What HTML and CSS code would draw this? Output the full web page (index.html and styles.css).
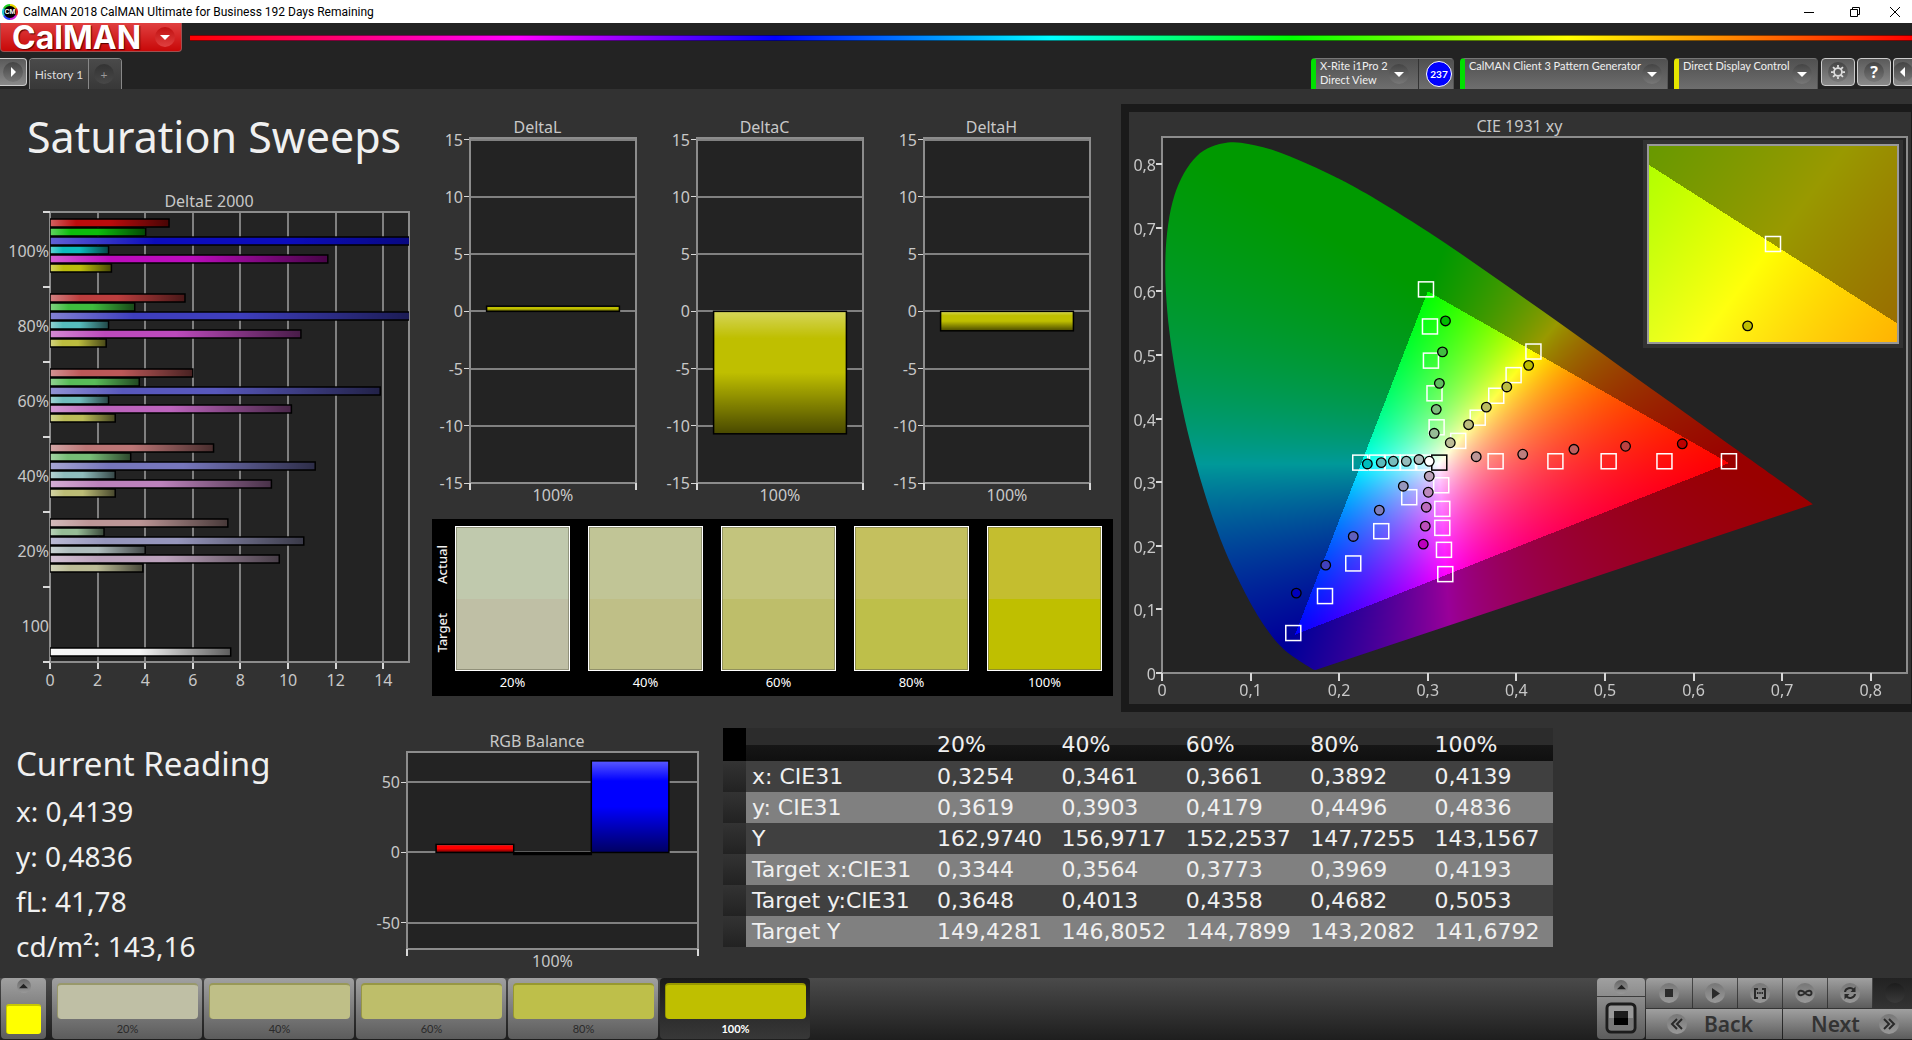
FILE: index.html
```html
<!DOCTYPE html>
<html lang="en">
<head>
	<meta charset="UTF-8">
	<title>CalMAN 2018</title>
	<link rel="stylesheet" href="styles.css">
</head>
<body>
	<div class="titlebar">
		<svg class="appicon" viewBox="0 0 16 16">
			<circle cx="8" cy="8" r="7" fill="#000"/>
			<path d="M8 1a7 7 0 0 1 6 3.500" fill="none" stroke="#e6d800" stroke-width="2"/>
			<path d="M14 4.500a7 7 0 0 1 0 7" fill="none" stroke="#e02020" stroke-width="2"/>
			<path d="M14 11.500a7 7 0 0 1-6 3.500" fill="none" stroke="#d020d0" stroke-width="2"/>
			<path d="M8 15a7 7 0 0 1-6-3.500" fill="none" stroke="#3040ff" stroke-width="2"/>
			<path d="M2 11.500a7 7 0 0 1 0-7" fill="none" stroke="#20c8d0" stroke-width="2"/>
			<path d="M2 4.500a7 7 0 0 1 6-3.500" fill="none" stroke="#20d020" stroke-width="2"/>
			<text x="8" y="10" text-anchor="middle" class="apptext">CM</text>
		</svg>
		<span class="wintitle">CalMAN 2018 CalMAN Ultimate for Business 192 Days Remaining</span>
		<button class="winbtn" aria-label="Minimize"><svg viewBox="0 0 12 12"><path d="M1 6.500h10"/></svg></button>
		<button class="winbtn" aria-label="Restore"><svg viewBox="0 0 12 12"><path d="M1.500 3.500h7v7h-7zM3.500 3.500v-2h7v7h-2"/></svg></button>
		<button class="winbtn closebtn" aria-label="Close"><svg viewBox="0 0 12 12"><path d="M1 1l10 10M11 1L1 11"/></svg></button>
	</div>

	<div class="header">
		<div class="brandrow">
			<button class="brand">CalMAN<span class="round redround"><svg viewBox="0 0 10 10"><path d="M0 3h10L5 8z"/></svg></span></button>
			<div class="rainbow"></div>
		</div>
		<div class="tabrow">
			<button class="sq first" aria-label="Expand"><span class="round"><svg viewBox="0 0 10 10"><path d="M3 0v10l5-5z"/></svg></span></button>
			<div class="tabs">
				<button class="tab">History 1</button>
				<button class="tab plus"><span class="round dim">+</span></button>
			</div>
			<div class="devices">
				<div class="device meter">
					<button class="devbtn"><span class="devname">X-Rite i1Pro 2<br>Direct View</span><span class="round"><svg viewBox="0 0 10 10"><path d="M0 3h10L5 8z"/></svg></span></button>
					<span class="badge">237</span>
				</div>
				<div class="device source">
					<button class="devbtn"><span class="devname">CalMAN Client 3 Pattern Generator</span><span class="round"><svg viewBox="0 0 10 10"><path d="M0 3h10L5 8z"/></svg></span></button>
				</div>
				<div class="device display">
					<button class="devbtn"><span class="devname">Direct Display Control</span><span class="round"><svg viewBox="0 0 10 10"><path d="M0 3h10L5 8z"/></svg></span></button>
				</div>
				<button class="sq" aria-label="Settings"><span class="round"><svg class="gear" viewBox="0 0 16 16"><circle cx="8" cy="8" r="4.500" fill="none" stroke="#ddd" stroke-width="2"/><path d="M8 0v3M8 13v3M0 8h3M13 8h3M2.300 2.300l2.200 2.200M11.500 11.500l2.200 2.200M2.300 13.700l2.200-2.200M11.500 4.500l2.200-2.200" stroke="#ddd" stroke-width="2"/></svg></span></button>
				<button class="sq" aria-label="Help"><span class="round help">?</span></button>
				<button class="sq last" aria-label="Collapse"><span class="round"><svg viewBox="0 0 10 10"><path d="M7 0v10L2 5z"/></svg></span></button>
			</div>
		</div>
	</div>

	<div class="workspace">
		<div class="top">
			<div class="col1">
				<h1>Saturation Sweeps</h1>
				<div class="chart" id="deltaE"></div>
			</div>
			<div class="col2">
				<div class="deltas">
					<div class="chart" id="deltaL"></div>
					<div class="chart" id="deltaC"></div>
					<div class="chart" id="deltaH"></div>
				</div>
				<div class="compare">
					<div class="sides"><span>Actual</span><span>Target</span></div>
					<div class="patch"><div class="pair"><i class="a20"></i><i class="t20"></i></div>20%</div>
					<div class="patch"><div class="pair"><i class="a40"></i><i class="t40"></i></div>40%</div>
					<div class="patch"><div class="pair"><i class="a60"></i><i class="t60"></i></div>60%</div>
					<div class="patch"><div class="pair"><i class="a80"></i><i class="t80"></i></div>80%</div>
					<div class="patch"><div class="pair"><i class="a100"></i><i class="t100"></i></div>100%</div>
				</div>
			</div>
			<div class="ciepanel">
				<div class="chart" id="cie"></div>
			</div>
		</div>
		<div class="bottom">
			<div class="reading">
				<h2>Current Reading</h2>
				<p>x: 0,4139</p>
				<p>y: 0,4836</p>
				<p>fL: 41,78</p>
				<p>cd/m²: 143,16</p>
			</div>
			<div class="chart rgb" id="rgb"></div>
			<table class="data">
				<thead>
					<tr><th class="stub"></th><th class="name"></th><th>20%</th><th>40%</th><th>60%</th><th>80%</th><th>100%</th></tr>
				</thead>
				<tbody>
					<tr><td class="stub"></td><td>x: CIE31</td><td>0,3254</td><td>0,3461</td><td>0,3661</td><td>0,3892</td><td>0,4139</td></tr>
					<tr><td class="stub"></td><td>y: CIE31</td><td>0,3619</td><td>0,3903</td><td>0,4179</td><td>0,4496</td><td>0,4836</td></tr>
					<tr><td class="stub"></td><td>Y</td><td>162,9740</td><td>156,9717</td><td>152,2537</td><td>147,7255</td><td>143,1567</td></tr>
					<tr><td class="stub"></td><td>Target x:CIE31</td><td>0,3344</td><td>0,3564</td><td>0,3773</td><td>0,3969</td><td>0,4193</td></tr>
					<tr><td class="stub"></td><td>Target y:CIE31</td><td>0,3648</td><td>0,4013</td><td>0,4358</td><td>0,4682</td><td>0,5053</td></tr>
					<tr><td class="stub"></td><td>Target Y</td><td>149,4281</td><td>146,8052</td><td>144,7899</td><td>143,2082</td><td>141,6792</td></tr>
				</tbody>
			</table>
		</div>
	</div>

	<div class="footer">
		<button class="current" aria-label="Pattern colour"><span class="mini"><svg viewBox="0 0 10 10"><path d="M0 7h10L5 2z"/></svg></span><i class="yellow"></i></button>
		<div class="levels">
			<button class="level"><i class="t20"></i>20%</button>
			<button class="level"><i class="t40"></i>40%</button>
			<button class="level"><i class="t60"></i>60%</button>
			<button class="level"><i class="t80"></i>80%</button>
			<button class="level active"><i class="t100"></i>100%</button>
		</div>
		<div class="stopbox">
			<button class="up" aria-label="More"><span class="mini"><svg viewBox="0 0 10 10"><path d="M0 7h10L5 2z"/></svg></span></button>
			<button class="bigstop" aria-label="Pattern window"><svg viewBox="0 0 32 32"><rect x="2" y="2" width="28" height="28" rx="4" fill="#999" stroke="#1c1c1c" stroke-width="3"/><rect x="4" y="16" width="24" height="12" fill="#777"/><rect x="9" y="9" width="14" height="14" fill="#000"/><rect x="9" y="9" width="14" height="7" fill="#1c1c1c"/></svg></button>
		</div>
		<div class="controls">
			<div class="crow">
				<button class="ctl" aria-label="Stop"><span class="knob"><svg viewBox="0 0 20 20"><path d="M6 6h8v8H6z"/></svg></span></button>
				<button class="ctl" aria-label="Play"><span class="knob"><svg viewBox="0 0 20 20"><path d="M7 5v11l8-5.500z"/></svg></span></button>
				<button class="ctl" aria-label="Read series"><span class="knob"><svg viewBox="0 0 20 20"><path d="M4 5h4v2H6v7h2v2H4zM16 5h-4v2h2v7h-2v2h4zM7 9h1.500v2H7zM9.250 9h1.500v2h-1.500zM11.500 9H13v2h-1.500z"/></svg></span></button>
				<button class="ctl" aria-label="Continuous"><span class="knob"><svg viewBox="0 0 20 20"><path class="line" d="M10 10C8 7.500 3.500 6.500 3.500 10S8 12.500 10 10s6.500-3.500 6.500 0S12 12.500 10 10z"/></svg></span></button>
				<button class="ctl" aria-label="Refresh"><span class="knob"><svg viewBox="0 0 20 20"><path class="line" d="M5 9c.5-4 6-5 8.500-2.500M15 11c-.5 4-6 5-8.500 2.500"/><path d="M15.500 3.500v5.500h-5zM4.500 16.500V11h5z"/></svg></span></button>
				<button class="ctl off" aria-label="Idle"><span class="knob"></span></button>
			</div>
			<div class="crow">
				<button class="nav back"><span class="knob"><svg viewBox="0 0 20 20"><path class="line" d="M10 5l-5 5 5 5M15 5l-5 5 5 5"/></svg></span>Back</button>
				<button class="nav next">Next<span class="knob"><svg viewBox="0 0 20 20"><path class="line" d="M5 5l5 5-5 5M10 5l5 5-5 5"/></svg></span></button>
			</div>
		</div>
	</div>
	<script src="charts.js"></script>
</body>
</html>
```
FILE: styles.css
```css
*{
	box-sizing: border-box;
}
body{
	margin: 0;
	height: 100vh;
	display: flex;
	flex-direction: column;
	overflow: hidden;
	background-color: #323232;
	color: #f0f0f0;
	font-family: "Noto Sans", "Open Sans", sans-serif;
}
button{
	border: 0;
	padding: 0;
	margin: 0;
	font-family: inherit;
	color: inherit;
}
svg{
	display: block;
}

/* title bar */
.titlebar{
	height: 23px;
	flex: none;
	display: flex;
	align-items: center;
	background-color: #fff;
	color: #000;
}
.appicon{
	width: 16px;
	height: 16px;
	margin: 0 5px 0 2px;
}
.apptext{
	font: bold 7px "Liberation Sans", sans-serif;
	fill: #fff;
}
.wintitle{
	flex: 1;
	font: 12px Roboto, sans-serif;
}
.winbtn{
	width: 46px;
	height: 23px;
	display: flex;
	align-items: center;
	justify-content: center;
	background: none;
}
.closebtn{
	width: 34px;
}
.winbtn svg{
	width: 12px;
	height: 12px;
	fill: none;
	stroke: #000;
}

/* header */
.header{
	height: 66px;
	flex: none;
	display: flex;
	flex-direction: column;
	justify-content: space-between;
	background-color: #232323;
}
.brandrow{
	display: flex;
	align-items: center;
	gap: 8px;
}
.brand{
	width: 182px;
	height: 29px;
	display: flex;
	align-items: center;
	justify-content: space-between;
	padding: 0 6px 0 11px;
	border: 1px solid #a05050;
	border-top: 0;
	border-radius: 0 0 4px 4px;
	background: linear-gradient(#e04040, #c80808);
	color: #fff;
	font: 700 32px/29px Inter, sans-serif;
	text-shadow: 1px 1px 1px #500;
}
.rainbow{
	flex: 1;
	height: 6px;
	border-top: 1px solid rgba(0,0,0,.5);
	border-bottom: 1px solid rgba(0,0,0,.5);
	background: linear-gradient(90deg, #f00, #f0f 19%, #00f 34%, #0ff 50%, #0f0 64%, #ff0 80%, #f00) border-box;
}
.round{
	width: 20px;
	height: 20px;
	flex: none;
	display: flex;
	align-items: center;
	justify-content: center;
	border-radius: 50%;
	background: linear-gradient(#444, #777);
}
.round svg{
	width: 10px;
	height: 10px;
	fill: #fff;
}
.redround{
	background: linear-gradient(#c01010, #e04040);
}
.tabrow{
	height: 31px;
	display: flex;
	align-items: flex-start;
}
.sq{
	width: 34px;
	height: 28px;
	flex: none;
	display: flex;
	align-items: center;
	justify-content: center;
	border: 1px solid #ccc;
	border-radius: 4px;
	background: linear-gradient(#5a5a5a, #8a8a8a);
}
.first{
	width: 27px;
	border-left: 0;
	border-radius: 0 4px 4px 0;
}
.last{
	width: 19px;
	border-right: 0;
	border-radius: 4px 0 0 4px;
	overflow: hidden;
}
.sq .gear{
	width: 14px;
	height: 14px;
}
.help{
	font-size: 16px;
	font-weight: bold;
	color: #fff;
}
.tabs{
	display: flex;
	height: 31px;
	margin-left: 2px;
	border: 1px solid #888;
	border-bottom: 0;
	border-radius: 4px 4px 0 0;
	overflow: hidden;
}
.tab{
	width: 58px;
	background: linear-gradient(#4a4a4a, #383838);
	color: #ddd;
	font: 12px Lato, sans-serif;
}
.plus{
	width: 33px;
	padding-left: 5px;
	border-left: 1px solid #888;
}
.dim{
	background: linear-gradient(#333, #484848);
	color: #999;
}
.devices{
	flex: 1;
	height: 31px;
	display: flex;
	justify-content: flex-end;
	gap: 2px;
}
.device{
	height: 31px;
	display: flex;
	align-items: center;
	margin-right: 4px;
	border-top: 1px solid #777;
	border-right: 1px solid #555;
	border-left: 5px solid #00e000;
	border-radius: 4px 4px 0 0;
	background: linear-gradient(#505050, #6e6e6e);
}
.devbtn{
	height: 30px;
	flex: 1;
	display: flex;
	align-items: center;
	justify-content: space-between;
	padding: 0 5px 0 4px;
	background: none;
	color: #f0f0f0;
	text-align: left;
	font: 11px/14px Lato, sans-serif;
}
.devname{
	align-self: flex-start;
}
.meter{
	width: 143px;
}
.meter .devbtn{
	padding-right: 9px;
	border-right: 1px solid #333;
}
.source{
	width: 208px;
}
.display{
	width: 144px;
	margin-right: 1px;
	border-left-color: #e6e600;
}
.badge{
	width: 26px;
	height: 26px;
	margin: 0 1px 0 7px;
	border: 1px solid #fff;
	border-radius: 50%;
	background-color: #00f;
	color: #fff;
	font: bold 10px/24px Lato, sans-serif;
	text-align: center;
}

/* workspace */
.workspace{
	flex: 1;
	min-height: 0;
	display: grid;
	grid-template-rows: minmax(0, 608fr) minmax(0, 250fr);
	gap: 16px;
	padding: 15px 0 0 8px;
}
.top{
	display: grid;
	grid-template-columns: minmax(0, 416fr) minmax(0, 681fr) minmax(0, 791fr);
	gap: 8px;
}
.chart{
	min-width: 0;
	min-height: 0;
	overflow: hidden;
}
.chart text{
	font-size: 16px;
	fill: #c8c8c8;
}
.col1{
	display: flex;
	flex-direction: column;
	padding: 0 14px 20px 0;
	min-height: 0;
}
h1{
	margin: 0 0 21px 19px;
	font-size: 43px;
	line-height: 66px;
	font-weight: 400;
	white-space: nowrap;
}
.col1 .chart{
	flex: 1;
}
.col2{
	display: flex;
	flex-direction: column;
	gap: 10px;
	padding: 13px 0 16px;
	min-height: 0;
}
.deltas{
	flex: 1;
	min-height: 0;
	display: grid;
	grid-template-columns: repeat(3, minmax(0, 1fr));
	gap: 28px;
	padding: 0 22px 0 6px;
}
.compare{
	height: 177px;
	display: flex;
	gap: 18px;
	padding: 7px 11px 0 0;
	background-color: #000;
	font-size: 13px;
}
.sides{
	width: 23px;
	height: 145px;
	margin-right: -18px;
	padding: 4px 4px 4px 0;
	display: flex;
	flex-direction: column;
	justify-content: space-around;
	align-items: center;
	font-weight: 500;
}
.sides span{
	writing-mode: vertical-rl;
	transform: rotate(180deg);
}
.patch{
	flex: 1;
	text-align: center;
	line-height: 22px;
	color: #fff;
}
.pair{
	height: 145px;
	display: flex;
	flex-direction: column;
	border: 1px solid #fff;
}
.pair i{
	flex: 1;
	border: 1px solid rgba(100,100,80,.5);
	border-bottom: 0;
}
.pair i + i{
	border-top: 0;
	border-bottom: 1px solid rgba(100,100,80,.5);
}
.a20{ background-color: #c0c9ad; }
.a40{ background-color: #c1c596; }
.a60{ background-color: #c3c47d; }
.a80{ background-color: #c4c05e; }
.a100{ background-color: #c4be2f; }
.t20{ background-color: #bfbfa5; }
.t40{ background-color: #bfbf87; }
.t60{ background-color: #bebe6a; }
.t80{ background-color: #bebf4a; }
.t100{ background-color: #bfbf00; }
.ciepanel{
	display: flex;
	min-height: 0;
	padding: 4px 3px 0 2px;
	border: 8px solid #1a1a1a;
	border-right-width: 1px;
}
.ciepanel .chart{
	flex: 1;
	position: relative;
}
/* the colour fill lies under the axes */
.ciepanel canvas, .ciepanel svg{
	position: absolute;
	left: 0;
	top: 0;
}
.bottom{
	display: grid;
	grid-template-columns: minmax(0, 367fr) minmax(0, 324fr) 24px minmax(0, 830fr) minmax(0, 359fr);
	align-items: start;
}
.reading{
	padding: 11px 0 0 8px;
}
h2{
	margin: 0;
	font-size: 33px;
	line-height: 50px;
	font-weight: 400;
}
.reading p{
	margin: 0;
	font-size: 28px;
	line-height: 45px;
}
.rgb{
	align-self: stretch;
	margin: 3px 0;
}
.data{
	grid-column: 4;
	width: 100%;
	table-layout: fixed;
	border-collapse: collapse;
	font: 22px/31px "DejaVu Sans", sans-serif;
}
.data th, .data td{
	height: 31px;
	padding: 0 0 0 6px;
	text-align: left;
	font-weight: 400;
	white-space: nowrap;
}
.data th{
	height: 33px;
	background: linear-gradient(#2c2c2c 50%, #161616 51%, #101010);
}
.data .name{
	width: 185px;
}
.data .stub{
	width: 23px;
	background: linear-gradient(#333, #222);
}
.data th.stub{
	background: #000;
}
.data tbody tr{
	background-color: #404040;
}
.data tbody tr:nth-child(even){
	background-color: #808080;
}

/* footer */
.footer{
	height: 62px;
	flex: none;
	display: flex;
	padding-left: 1px;
	background: linear-gradient(#4a4a4a, #1e1e1e);
}
.footer button{
	background: linear-gradient(#a0a0a0, #5c5c5c);
}
.current{
	width: 45px;
	height: 61px;
	display: flex;
	flex-direction: column;
	align-items: center;
	justify-content: space-between;
	border-radius: 4px;
}
.footer .current{
	padding: 1px 0 5px;
}
.mini{
	width: 14px;
	height: 14px;
	display: flex;
	align-items: center;
	justify-content: center;
	border-radius: 50%;
	background: linear-gradient(#666, #999);
}
.mini svg{
	width: 9px;
	height: 9px;
	fill: #222;
}
.yellow{
	width: 35px;
	height: 30px;
	border-top: 2px solid #c8c800;
	border-left: 1px solid #c8c800;
	border-radius: 3px;
	background-color: #ff0;
}
.levels{
	display: flex;
	gap: 2px;
	margin-left: 6px;
}
.level{
	width: 150px;
	height: 61px;
	border-radius: 4px;
	color: #2a2a2a;
	font: 11px/20px Lato, sans-serif;
}
.footer .level{
	padding: 5px 4px 0 5px;
}
.level i{
	display: block;
	height: 36px;
	border-top: 2px solid rgba(80,80,0,.35);
	border-left: 1px solid rgba(80,80,0,.35);
	border-radius: 4px;
}
.footer .active{
	background: linear-gradient(#1a1a1a, #383838);
	color: #fff;
	font-weight: bold;
}
.stopbox{
	width: 48px;
	margin-left: auto;
	display: flex;
	flex-direction: column;
	gap: 1px;
}
.stopbox button{
	display: flex;
	align-items: center;
	justify-content: center;
}
.stopbox .up{
	height: 18px;
	border-radius: 4px 4px 0 0;
	background: linear-gradient(#a0a0a0, #8c8c8c);
}
.stopbox .bigstop{
	height: 42px;
	border-radius: 0 0 4px 4px;
	background: linear-gradient(#8c8c8c, #5c5c5c);
}
.bigstop svg{
	width: 32px;
	height: 32px;
}
.controls{
	width: 266px;
	margin-left: 1px;
	display: flex;
	flex-direction: column;
	gap: 1px;
}
.crow{
	display: flex;
	gap: 1px;
	overflow: hidden;
}
.ctl{
	width: 44px;
	height: 30px;
	flex: none;
	display: flex;
	align-items: center;
	justify-content: center;
}
.ctl:first-child{
	width: 46px;
	border-radius: 4px 0 0 0;
}
.footer .off{
	background: linear-gradient(#222, #333);
}
.knob{
	width: 20px;
	height: 20px;
	border-radius: 50%;
	background: linear-gradient(#777, #999);
}
.off .knob{
	background: linear-gradient(#1c1c1c, #3a3a3a);
}
.knob svg{
	width: 20px;
	height: 20px;
	fill: #2a2a2a;
}
.knob .line{
	fill: none;
	stroke: #2a2a2a;
	stroke-width: 2;
}
.nav{
	height: 30px;
	flex: none;
	display: flex;
	align-items: center;
	color: #333;
	font-size: 21px;
	font-weight: 600;
}
.back{
	width: 136px;
	gap: 17px;
}
.footer .back{
	padding-left: 21px;
}
.next{
	width: 134px;
	gap: 19px;
}
.footer .next{
	padding-left: 28px;
}
```
FILE: charts.js
```js
var NS = "http://www.w3.org/2000/svg";

function add(parent, name, attrs, text){
	var e = document.createElementNS(NS, name);
	for(var k in attrs){
		e.setAttribute(k, attrs[k]);
	}
	if(text !== undefined){
		e.textContent = text;
	}
	parent.appendChild(e);
	return e;
}

function label(svg, x, y, text, anchor){
	add(svg, "text", {x: x, y: y + 6, "text-anchor": anchor || "middle"}, text);
}

function line(svg, x1, y1, x2, y2, color, width){
	add(svg, "path", {d: "M" + x1 + " " + y1 + "L" + x2 + " " + y2, stroke: color, "stroke-width": width, "shape-rendering": "crispEdges"});
}

// plot frame inside the box, title centred over the whole box
function frame(id, title, left, bottom){
	var box = document.getElementById(id);
	box.innerHTML = "";
	var w = box.clientWidth, h = box.clientHeight;
	var svg = add(box, "svg", {width: w, height: h});
	var p = {box: box, svg: svg, x: left, y: 21, w: w - left - 1, h: h - bottom - 21};
	p.r = p.x + p.w;
	p.b = p.y + p.h;
	label(svg, w / 2, 10, title);
	add(svg, "rect", {x: p.x, y: p.y, width: p.w, height: p.h, fill: "#232323"});
	return p;
}

function border(p){
	add(p.svg, "rect", {x: p.x, y: p.y, width: p.w, height: p.h, fill: "none", stroke: "#8c8c8c", "stroke-width": 2, "shape-rendering": "crispEdges"});
}

var gradId = 0;
function bar(svg, x, y, w, h, color, horizontal){
	var id = "g" + (gradId++);
	var g = add(svg, "linearGradient", {id: id, x1: 0, y1: 0, x2: horizontal ? 1 : 0, y2: horizontal ? 0 : 1});
	add(g, "stop", {offset: 0, "stop-color": "#fff", "stop-opacity": 0.35});
	add(g, "stop", {offset: 0.22, "stop-color": "#fff", "stop-opacity": 0});
	add(g, "stop", {offset: 0.5, "stop-color": "#000", "stop-opacity": 0});
	add(g, "stop", {offset: 1, "stop-color": "#000", "stop-opacity": 0.62});
	add(svg, "rect", {x: x, y: y, width: w, height: h, fill: color});
	add(svg, "rect", {x: x, y: y, width: w, height: h, fill: "url(#" + id + ")", stroke: "#000", "stroke-width": 1.5});
}

var sweeps = [
	["100%", 12, [5.0, 4.02, 20, 2.46, 11.67, 2.58]],
	["80%", 62, [5.67, 3.56, 16, 2.46, 10.54, 2.36]],
	["60%", 88, [6.0, 3.75, 13.87, 2.46, 10.14, 2.74]],
	["40%", 118, [6.87, 3.39, 11.14, 2.74, 9.3, 2.74]],
	["20%", 150, [7.47, 2.27, 10.66, 4.0, 9.63, 3.9]],
	["100", 255, []]
];
// which of R, G, B is high for each series
var hues = ["100", "010", "001", "011", "101", "110"];

function hueColor(hue, low){
	// pale cyan and magenta wash out sooner than the rest
	if(low > 50 && hue == "011"){
		low += 24;
	}
	if(low > 50 && hue == "101"){
		low += 12;
	}
	return "rgb(" + hue.split("").map(function(c){ return c == "1" ? 188 : low; }).join(",") + ")";
}

function drawDeltaE(){
	var p = frame("deltaE", "DeltaE 2000", 42, 30);
	var sx = p.w / 15.08, step = p.h / 6, slot = step * 0.12;
	for(var v = 0; v <= 14; v += 2){
		var x = p.x + v * sx;
		if(v){
			line(p.svg, x, p.y, x, p.b, "#808080", 2);
		}
		line(p.svg, x, p.b, x, p.b + 7, "#d8d8d8", 2);
		label(p.svg, x, p.b + 18, v);
	}
	border(p);
	var clip = add(p.svg, "clipPath", {id: "clipE"});
	add(clip, "rect", {x: p.x, y: p.y, width: p.w, height: p.h});
	var bars = add(p.svg, "g", {"clip-path": "url(#clipE)"});
	sweeps.forEach(function(s, i){
		var top = p.y + i * step;
		line(p.svg, p.x - 7, top, p.x, top, "#d8d8d8", 2);
		label(p.svg, p.x - 1, top + step / 2 + 1, s[0], "end");
		s[2].forEach(function(val, j){
			bar(bars, p.x, top + 7 + j * slot, val * sx, slot - 1, hueColor(hues[j], s[1]), true);
		});
	});
	bar(bars, p.x, p.y + 5 * step + 7 + 6 * slot, 7.59 * sx, slot - 1, "#f4f4f4", true);
	line(p.svg, p.x - 7, p.b, p.x, p.b, "#d8d8d8", 2);
}

function drawBars(id, title, left, min, max, ticks, values, colors){
	var p = frame(id, title, left, 26);
	var sy = p.h / (max - min);
	ticks.forEach(function(t){
		var y = p.b - (t - min) * sy;
		line(p.svg, p.x, y, p.r, y, "#808080", 2);
		line(p.svg, p.x - 6, y, p.x, y, "#d8d8d8", 1);
		label(p.svg, p.x - 7, y, t, "end");
	});
	border(p);
	line(p.svg, p.x, p.b, p.x, p.b + 7, "#d8d8d8", 2);
	line(p.svg, p.r, p.b, p.r, p.b + 7, "#d8d8d8", 2);
	label(p.svg, p.x + p.w / 2, p.b + 12, "100%");
	var zero = p.b + min * sy, w = p.w * 0.8 / values.length;
	values.forEach(function(v, i){
		var h = Math.max(Math.abs(v) * sy, 2);
		bar(p.svg, p.x + p.w * 0.1 + i * w, v < 0 ? zero : zero - h, w, h, colors[i]);
	});
}

var locus = [
	[.1741,.0050],[.1733,.0048],[.1714,.0051],[.1689,.0069],[.1644,.0109],[.1566,.0177],[.1440,.0297],
	[.1355,.0399],[.1241,.0578],[.1096,.0868],[.0913,.1327],[.0687,.2007],[.0454,.2950],[.0235,.4127],
	[.0082,.5384],[.0039,.6548],[.0139,.7502],[.0389,.8120],[.0743,.8338],[.1142,.8262],[.1547,.8059],
	[.1929,.7816],[.2296,.7543],[.3016,.6923],[.3731,.6245],[.4441,.5547],[.5125,.4866],[.5752,.4242],
	[.6270,.3725],[.6658,.3340],[.6915,.3083],[.7190,.2809],[.7347,.2653]
];

// fill a canvas with the chromaticity colours, dimmed outside the Rec.709 triangle
function fillColors(canvas, toX, toY){
	var ctx = canvas.getContext("2d");
	var w = canvas.width, h = canvas.height;
	var img = ctx.createImageData(w, h), d = img.data, n = 0;
	for(var j = 0; j < h; j++){
		for(var i = 0; i < w; i++){
			var x = toX(i + 0.5), y = toY(j + 0.5), z = 1 - x - y;
			var r = 3.2406 * x - 1.5372 * y - 0.4986 * z;
			var g = -0.9689 * x + 1.8758 * y + 0.0415 * z;
			var b = 0.0557 * x - 0.2040 * y + 1.0570 * z;
			var k = 255 / Math.max(r, g, b);
			if(Math.min(r, g, b) < 0){
				k *= 0.6;
			}
			d[n++] = r * k;
			d[n++] = g * k;
			d[n++] = b * k;
			d[n++] = 255;
		}
	}
	ctx.putImageData(img, 0, 0);
	return ctx;
}

// target points on each sweep
var targets = [
	[.310,.3862],[.3076,.4396],[.3036,.491],[.3025,.5447],[.298,.603],
	[.3344,.3648],[.3564,.4013],[.3773,.4358],[.3969,.4682],[.4193,.5053],
	[.3766,.3328],[.4441,.3328],[.5042,.3328],[.5672,.3328],[.64,.3328],
	[.2960,.3307],[.2777,.3307],[.2604,.3307],[.2427,.3307],[.2238,.3307],
	[.3152,.2951],[.3164,.258],[.3164,.2281],[.3183,.1936],[.3198,.1554],
	[.2791,.2763],[.2475,.2229],[.2159,.1722],[.184,.1209],[.1482,.0628]
];
// measured points by hue, 20% to 100%
var readings = {
	"010": [[.3073,.3768],[.3096,.4144],[.3131,.4553],[.3166,.5047],[.320,.5534]],
	"110": [[.3254,.3619],[.3461,.3903],[.3661,.4179],[.3892,.4496],[.4139,.4836]],
	"100": [[.3547,.340],[.4072,.3438],[.465,.3516],[.5233,.3564],[.5873,.3603]],
	"011": [[.2901,.3355],[.2758,.3328],[.2611,.3328],[.2475,.3307],[.2318,.3286]],
	"101": [[.3017,.3093],[.3006,.2841],[.2983,.2606],[.2972,.2308],[.2949,.2025]],
	"001": [[.2724,.2936],[.2453,.2559],[.2159,.2146],[.1848,.1695],[.1516,.1256]]
};
var lows = [150, 125, 95, 65, 0];

function square(svg, x, y, color){
	add(svg, "rect", {x: x - 7.5, y: y - 7.5, width: 15, height: 15, fill: "none", stroke: color, "stroke-width": 1.5});
}
function dot(svg, x, y, color){
	add(svg, "circle", {cx: x, cy: y, r: 4.8, fill: color, stroke: "#000", "stroke-width": 1.3});
}
function comma(v){
	return v ? (v / 10).toFixed(1).replace(".", ",") : "0";
}

function drawCie(){
	var p = frame("cie", "CIE 1931 xy", 31, 31);
	var sx = p.w / 0.841, sy = p.h / 0.8425;
	var X = function(x){ return p.x + x * sx; };
	var Y = function(y){ return p.b - y * sy; };

	var canvas = document.createElement("canvas");
	canvas.width = p.box.clientWidth;
	canvas.height = p.box.clientHeight;
	p.box.appendChild(canvas);
	var ctx = fillColors(canvas, function(i){ return (i - p.x) / sx; }, function(j){ return (p.b - j) / sy; });
	ctx.globalCompositeOperation = "destination-in";
	ctx.beginPath();
	ctx.moveTo(X(locus[0][0]), Y(locus[0][1]));
	for(var i = 0; i < locus.length - 1; i++){
		var a = locus[Math.max(i - 1, 0)], b = locus[i], c = locus[i + 1], e = locus[Math.min(i + 2, locus.length - 1)];
		ctx.bezierCurveTo(X(b[0] + (c[0] - a[0]) / 6), Y(b[1] + (c[1] - a[1]) / 6),
			X(c[0] - (e[0] - b[0]) / 6), Y(c[1] - (e[1] - b[1]) / 6), X(c[0]), Y(c[1]));
	}
	ctx.closePath();
	ctx.fill();

	// axes and points go in a layer of their own over the canvas
	var svg = add(p.box, "svg", {width: canvas.width, height: canvas.height});
	p.svg = svg;
	border(p);
	for(var v = 0; v <= 8; v++){
		line(svg, X(v / 10), p.b, X(v / 10), p.b + 8, "#d8d8d8", 2);
		label(svg, X(v / 10), p.b + 17, comma(v));
		line(svg, p.x - 6, Y(v / 10), p.x, Y(v / 10), "#d8d8d8", 2);
		label(svg, p.x - 6, Y(v / 10) + 1, comma(v), "end");
	}
	targets.forEach(function(t){
		square(svg, X(t[0]), Y(t[1]), "#fff");
	});
	square(svg, X(.313), Y(.3307), "#000");
	for(var hue in readings){
		readings[hue].forEach(function(t, i){
			dot(svg, X(t[0]), Y(t[1]), hueColor(hue, lows[i]));
		});
	}
	dot(svg, X(.3017), Y(.3328), "#fff");

	// magnified view of the selected point
	var w = Math.round(p.w * 0.338), h = Math.round(p.h * 0.373);
	var left = p.r - w - 8, top = p.y + 7;
	var zoom = document.createElement("canvas");
	zoom.width = w;
	zoom.height = h;
	zoom.style.left = left + "px";
	zoom.style.top = top + "px";
	fillColors(zoom, function(i){ return .4193 + (i - w / 2) / (sx * 5.3); }, function(j){ return .5053 - (j - h / 2) / (sy * 5.93); });
	p.box.appendChild(zoom);
	var over = add(p.box, "svg", {width: canvas.width, height: canvas.height});
	add(over, "rect", {x: left - 2, y: top - 2, width: w + 4, height: h + 4, fill: "none", stroke: "#323232", "stroke-width": 4});
	add(over, "rect", {x: left + 1, y: top + 1, width: w - 2, height: h - 2, fill: "none", stroke: "#999", "stroke-width": 2});
	square(over, left + w / 2, top + h / 2, "#fff");
	dot(over, left + w / 2 - .0054 * sx * 5.3, top + h / 2 + .0217 * sy * 5.93, "#bfbf00");
}

function drawAll(){
	var t = [15, 10, 5, 0, -5, -10, -15];
	drawDeltaE();
	drawBars("deltaL", "DeltaL", 32, -15, 15.15, t, [0.45], ["#bfbf00"]);
	drawBars("deltaC", "DeltaC", 32, -15, 15.15, t, [-10.7], ["#bfbf00"]);
	drawBars("deltaH", "DeltaH", 32, -15, 15.15, t, [-1.7], ["#bfbf00"]);
	drawBars("rgb", "RGB Balance", 32, -68.5, 71.3, [50, 0, -50], [5.7, -1, 65], ["#f00", "#000", "#00f"]);
	drawCie();
}

drawAll();
window.onresize = drawAll;
```
